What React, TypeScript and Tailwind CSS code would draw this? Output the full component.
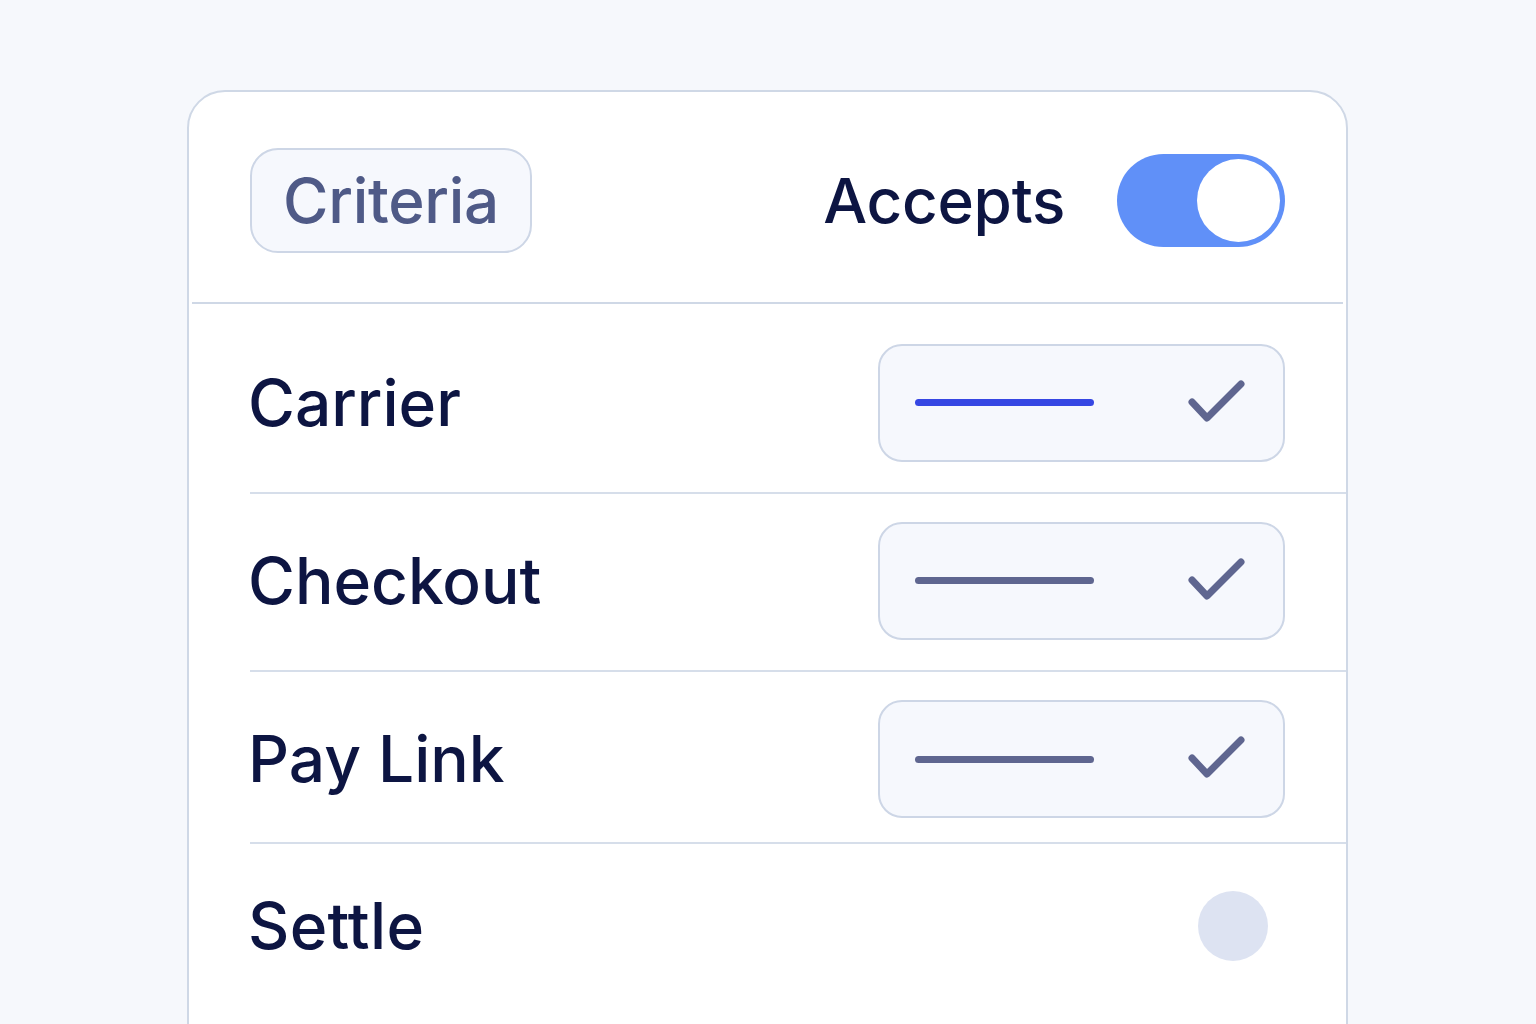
import React from "react";

function Check() {
  return (
    <svg width="60" height="48" viewBox="0 0 60 48" fill="none" className="shrink-0">
      <path d="M4 23 L 19 39 L 53 5" stroke="#5f6690" strokeWidth="7" strokeLinecap="round" strokeLinejoin="round" />
    </svg>
  );
}

function Box({ active }: { active?: boolean }) {
  return (
    <div className="w-[407px] h-[118px] rounded-[24px] border-2 border-[#cdd6e6] bg-[#f6f8fd] flex items-center pl-[35px] gap-[94px]">
      <div className={`w-[179px] h-[7px] rounded-full ${active ? "bg-[#3647e3]" : "bg-[#5f6690]"}`} />
      <Check />
    </div>
  );
}

export default function App() {
  const rows = [
    { label: "Carrier", h: "h-[190px] pt-[9px]", active: true },
    { label: "Checkout", h: "h-[178px] pb-[3px]" },
    { label: "Pay Link", h: "h-[172px] pt-[4px]" },
  ];
  return (
    <div className="w-[1536px] h-[1024px] overflow-hidden bg-[#f6f8fc] pt-[90px] pl-[187px]" style={{ fontFamily: "Inter, 'Noto Sans', sans-serif" }}>
      <div className="w-[1161px] h-[1000px] bg-white border-2 border-[#cfd8e6] rounded-[38px]">
        <div className="h-[212px] border-b-2 border-[#cfd8e6] flex items-center justify-between pl-[58px] pr-[58px] mx-[3px] pt-[6px]">
          <div className="w-[282px] h-[105px] rounded-[28px] border-2 border-[#cdd6e6] bg-[#f6f8fd] flex items-center justify-center">
            <span className="text-[62px] font-medium text-[#4f5a87] tracking-[-0.3px]">Criteria</span>
          </div>
          <div className="flex items-center gap-[52px]">
            <span className="text-[62px] font-medium text-[#0d1542] tracking-[-0.3px]">Accepts</span>
            <div className="w-[168px] h-[93px] rounded-full bg-[#6090f8] flex items-center justify-end pr-[5px]">
              <div className="w-[83px] h-[83px] rounded-full bg-white" />
            </div>
          </div>
        </div>
        {rows.map((r) => (
          <div key={r.label} className={`${r.h} ml-[61px] border-b-2 border-[#d6deea] flex items-center justify-between pr-[61px]`}>
            <span className="-ml-[2px] text-[64px] font-medium text-[#0d1542]">{r.label}</span>
            <Box active={r.active} />
          </div>
        ))}
        <div className="h-[170px] ml-[61px] flex items-center justify-between pr-[78px] pb-[6px]">
          <span className="-ml-[2px] text-[64px] font-medium text-[#0d1542] tracking-[0.3px]">Settle</span>
          <div className="w-[70px] h-[70px] rounded-full bg-[#dde3f2]" />
        </div>
      </div>
    </div>
  );
}
